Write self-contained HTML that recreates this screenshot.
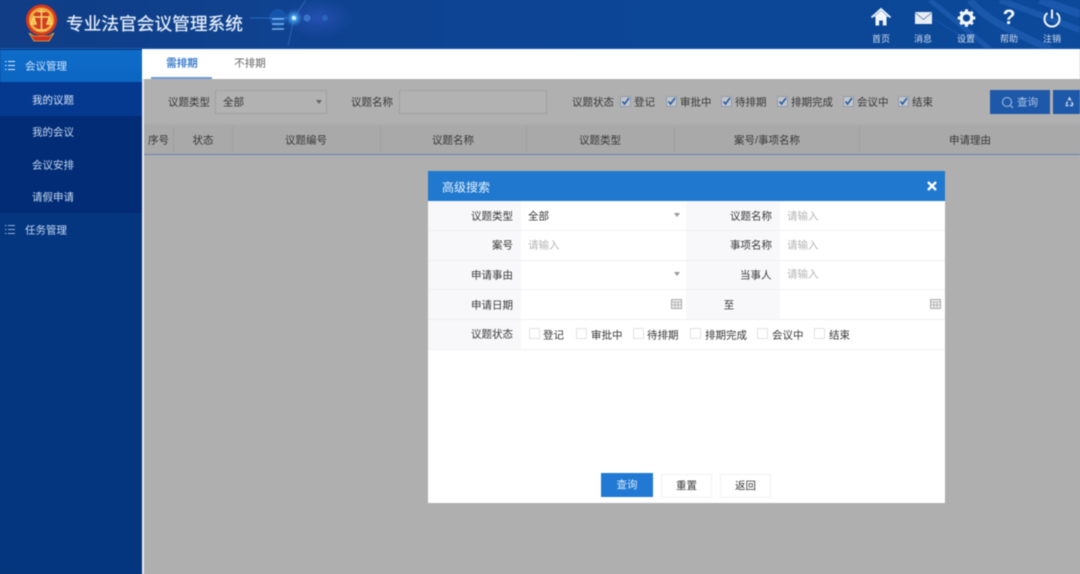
<!DOCTYPE html>
<html lang="zh">
<head>
<meta charset="utf-8">
<title>专业法官会议管理系统</title>
<style>
*{box-sizing:border-box}
html,body{margin:0;padding:0}
html{background:linear-gradient(#0d4693 49px,transparent 49px),linear-gradient(90deg,#04367f 142px,#afafb0 142px)}
body{width:1080px;height:574px;overflow:hidden;position:relative;background:#afafb0;font-family:"Liberation Sans","Noto Sans CJK SC",sans-serif;font-size:10.500px;color:#383838;filter:blur(.4px)}
.a{position:absolute;white-space:nowrap}
#hd{left:0;top:0;width:1080px;height:49px;background:linear-gradient(90deg,#103d85 0,#0f4290 25%,#0c4696 60%,#0c4898 85%,#0d4a9c 100%);overflow:hidden}
#side{left:0;top:49px;width:142px;height:525px;background:#04367f}
.nav{position:absolute;left:0;width:142px;color:#c4d8f2;font-size:10.500px}
.nav span{position:absolute;left:32px;top:50%;transform:translateY(-50%)}
.t{position:absolute;transform:translate(-50%,-50%);white-space:nowrap}
.r{position:absolute;transform:translateY(-50%);text-align:right;white-space:nowrap}
.l{position:absolute;transform:translateY(-50%);white-space:nowrap}
.cb{position:absolute;width:11px;height:11px;border:1px solid #8e9aab;background:#c3c5cb}
.cb svg{position:absolute;left:0;top:0}
.ck{position:absolute;width:11px;height:11px;border:1px solid #e2e2e2;background:#fff}
.ph{color:#b5b5b5;font-size:10.500px}
.sep{position:absolute;top:126px;width:1px;height:27px;background:#a0a0a1}
.tic{position:absolute;top:7px;width:32px;height:36px;color:#fff}
.tic b{position:absolute;left:-4px;width:40px;top:25px;font-weight:normal;font-size:9px;text-align:center;color:#cfdcef}
</style>
</head>
<body>
<div class="a" id="hd">
<svg width="1080" height="49" style="position:absolute;left:0;top:0">
<defs>
<radialGradient id="g1"><stop offset="0" stop-color="#e8fbff"/><stop offset=".22" stop-color="#4fb4f8" stop-opacity=".95"/><stop offset="1" stop-color="#2a73d0" stop-opacity="0"/></radialGradient>
<radialGradient id="g2"><stop offset="0" stop-color="#2d55c0" stop-opacity=".75"/><stop offset="1" stop-color="#2a4fb0" stop-opacity="0"/></radialGradient>
</defs>
<ellipse cx="318" cy="18" rx="36" ry="20" fill="url(#g2)"/>
<circle cx="278" cy="18" r="9" fill="#1a66c4" opacity=".5"/>
<circle cx="294" cy="18" r="9" fill="url(#g1)"/>
<circle cx="307" cy="18" r="3.500" fill="#4f91e0" opacity=".6"/>
<circle cx="294" cy="18" r="2" fill="#eafcff"/>
<circle cx="325" cy="18" r="3" fill="#2f6fc8" opacity=".7"/>
<path d="M250 18H288" stroke="#3f86da" stroke-width="1" opacity=".6"/>
<path d="M306 0L294 18L288 46" stroke="#4f96e6" stroke-width="1" opacity=".4" fill="none"/>
<g fill="none" stroke="#2d6fc6" opacity=".4">
<path d="M930 0L990 49" stroke-width="5"/><path d="M970 0C985 20 1020 35 1050 49" stroke-width="7"/><path d="M1000 0L1080 30" stroke-width="6"/><path d="M1040 0L1080 14" stroke-width="8"/><path d="M925 14L965 38" stroke-width="1"/>
</g>
<g stroke="#7fb2ea" stroke-width="1.600"><path d="M272 19H284M272 24H284M272 29H284"/></g>
<!-- emblem -->
<path d="M29 33L34 41H49L54 33L49 36H34Z" fill="#d2301c" stroke="#e6a83e" stroke-width=".8"/>
<circle cx="41.500" cy="20" r="15.500" fill="#d7381e"/>
<circle cx="41.500" cy="20" r="12.500" fill="#eca93c"/>
<circle cx="41.500" cy="20" r="9.500" fill="#d13c20"/>
<path d="M41.500 9V29M37.500 11.500H45.500M33.500 17H49.500M33.500 17L31 24H36ZM49.500 17L47 24H52ZM36 30H47" stroke="#f9d468" stroke-width="1.600" fill="#f0b23e"/>
</svg>
<div class="a" style="left:66px;top:12px;font-size:17.700px;line-height:25px;color:#e8f1fc;text-shadow:0 0 .6px #e8f1fc">专业法官会议管理系统</div>

<div class="tic" style="left:865px"><svg width="32" height="24" viewBox="0 0 32 24"><path d="M16 3.500L9 10H10.500V18.500H14.200V13.500H17.800V18.500H21.500V10H23Z" fill="#f2f6fb"/><path d="M6.500 10.500L16 2L25.500 10.500" fill="none" stroke="#f2f6fb" stroke-width="1.800"/></svg><b>首页</b></div>
<div class="tic" style="left:907px"><svg width="32" height="24" viewBox="0 0 32 24"><rect x="8" y="5" width="17" height="12" fill="#e8edf4"/><path d="M8 5.500L16.500 12.500L25 5.500" fill="none" stroke="#6f8fbc" stroke-width="1"/></svg><b>消息</b></div>
<div class="tic" style="left:950px"><svg width="32" height="24" viewBox="0 0 32 24"><circle cx="16.500" cy="11" r="5.300" fill="none" stroke="#f2f6fb" stroke-width="3.300"/><path d="M16.500 2.200V5M16.500 17V19.800M7.700 11H10.500M22.500 11H25.300M10.300 4.800L12.300 6.800M20.700 15.200L22.700 17.200M22.700 4.800L20.700 6.800M12.300 15.200L10.300 17.200" stroke="#f2f6fb" stroke-width="3"/></svg><b>设置</b></div>
<div class="tic" style="left:993px"><div class="t" style="left:16px;top:11px;font-size:21px;font-weight:bold;color:#f2f6fb;line-height:22px">?</div><b>帮助</b></div>
<div class="tic" style="left:1036px"><svg width="32" height="24" viewBox="0 0 32 24"><path d="M11.500 6A7.500 7.500 0 1 0 20.500 6" fill="none" stroke="#f2f6fb" stroke-width="2"/><path d="M16 2.500V11.500" stroke="#f2f6fb" stroke-width="2"/></svg><b>注销</b></div>
</div>

<div class="a" style="left:0;top:48px;width:1080px;height:1px;background:#1a5cae"></div>
<div class="a" style="left:0;top:49px;width:142px;height:1px;background:#7ea7dc;opacity:.6"></div>

<div class="a" id="side"></div>
<div class="nav" style="top:50px;height:32px;background:linear-gradient(180deg,#0e6cc9,#0c66c2);color:#cfe4fa"><span style="left:25px">会议管理</span>
<svg width="14" height="12" style="position:absolute;left:4px;top:10px"><path d="M4 1.500H11M4 5.500H11M4 9.500H11M1 1.500H2.500M1 5.500H2.500M1 9.500H2.500" stroke="#dcebfb" stroke-width="1.100"/></svg></div>
<div class="nav" style="top:82px;height:34px;background:#05398f;color:#d6e3f6"><span style="margin-top:1px">我的议题</span></div>
<div class="nav" style="top:116px;height:32px;background:#022c75"><span>我的会议</span></div>
<div class="nav" style="top:148px;height:33px;background:#022c75"><span>会议安排</span></div>
<div class="nav" style="top:181px;height:32px;background:#022c75"><span>请假申请</span></div>
<div class="nav" style="top:213px;height:33px;background:#04367f"><span style="left:25px">任务管理</span>
<svg width="14" height="12" style="position:absolute;left:4px;top:11px"><path d="M4 1.500H11M4 5.500H11M4 9.500H11M1 1.500H2.500M1 5.500H2.500M1 9.500H2.500" stroke="#8fb0dc" stroke-width="1.100"/></svg></div>

<div class="a" style="left:142px;top:49px;width:2px;height:525px;background:#e9ecf0"></div>
<div class="a" style="left:142px;top:49px;width:938px;height:30px;background:#fff"></div>
<div class="t" style="left:182px;top:63px;color:#3d7fcc;font-weight:bold">需排期</div>
<div class="t" style="left:250px;top:63px;color:#666">不排期</div>
<div class="a" style="left:151px;top:77px;width:61px;height:2px;background:#6f9bd2"></div>

<div class="a" style="left:144px;top:79px;width:936px;height:45px;background:#b1b0b1"></div>
<div class="a" style="left:144px;top:124px;width:936px;height:30px;background:#a9a9aa"></div>
<div class="a" style="left:144px;top:154px;width:936px;height:1px;background:#6a84b4"></div>
<div class="a" style="left:144px;top:155px;width:936px;height:419px;background:#afafb0"></div>

<div class="l" style="left:168px;top:102px">议题类型</div>
<div class="a" style="left:215px;top:90px;width:112px;height:24px;border:1px solid #a0a0a0;background:#b3b2b3"></div>
<div class="l" style="left:223px;top:102px">全部</div>
<div class="a" style="left:315.500px;top:100px;width:0;height:0;border-left:3.500px solid transparent;border-right:3.500px solid transparent;border-top:4px solid #666"></div>
<div class="l" style="left:351px;top:102px">议题名称</div>
<div class="a" style="left:399px;top:90px;width:148px;height:24px;border:1px solid #a0a0a0;background:#b3b2b3"></div>
<div class="l" style="left:572px;top:102px">议题状态</div>

<div class="cb" style="left:620px;top:96px"><svg width="9" height="9"><path d="M1.500 4.500L3.500 7L8 1" fill="none" stroke="#21599f" stroke-width="1.500"/></svg></div><div class="l" style="left:634px;top:102px">登记</div>
<div class="cb" style="left:666px;top:96px"><svg width="9" height="9"><path d="M1.500 4.500L3.500 7L8 1" fill="none" stroke="#21599f" stroke-width="1.500"/></svg></div><div class="l" style="left:680px;top:102px">审批中</div>
<div class="cb" style="left:721px;top:96px"><svg width="9" height="9"><path d="M1.500 4.500L3.500 7L8 1" fill="none" stroke="#21599f" stroke-width="1.500"/></svg></div><div class="l" style="left:735px;top:102px">待排期</div>
<div class="cb" style="left:777px;top:96px"><svg width="9" height="9"><path d="M1.500 4.500L3.500 7L8 1" fill="none" stroke="#21599f" stroke-width="1.500"/></svg></div><div class="l" style="left:791px;top:102px">排期完成</div>
<div class="cb" style="left:843px;top:96px"><svg width="9" height="9"><path d="M1.500 4.500L3.500 7L8 1" fill="none" stroke="#21599f" stroke-width="1.500"/></svg></div><div class="l" style="left:857px;top:102px">会议中</div>
<div class="cb" style="left:898px;top:96px"><svg width="9" height="9"><path d="M1.500 4.500L3.500 7L8 1" fill="none" stroke="#21599f" stroke-width="1.500"/></svg></div><div class="l" style="left:912px;top:102px">结束</div>

<div class="a" style="left:990px;top:90px;width:60px;height:24px;background:#1e58a8"></div>
<svg class="a" style="left:1001px;top:96px" width="13" height="13"><circle cx="6" cy="6" r="4.500" fill="none" stroke="#a9c4e8" stroke-width="1"/><path d="M9.500 9.500L12 12" stroke="#a9c4e8"/></svg>
<div class="l" style="left:1017px;top:102px;color:#a9c4e8">查询</div>
<div class="a" style="left:1053px;top:90px;width:27px;height:24px;background:#1e58a8"></div>
<svg class="a" style="left:1064px;top:97px" width="11" height="11"><path d="M5.500 1L9.500 8.500H1.500Z" fill="none" stroke="#c5d6ee" stroke-width="1.500" stroke-dasharray="3 1.500"/></svg>

<div class="t" style="left:158.500px;top:140px">序号</div>
<div class="t" style="left:203px;top:140px">状态</div>
<div class="t" style="left:306px;top:140px">议题编号</div>
<div class="t" style="left:453px;top:140px">议题名称</div>
<div class="t" style="left:600px;top:140px">议题类型</div>
<div class="t" style="left:767px;top:140px">案号/事项名称</div>
<div class="t" style="left:970px;top:140px">申请理由</div>
<div class="sep" style="left:173px"></div>
<div class="sep" style="left:232px"></div>
<div class="sep" style="left:380px"></div>
<div class="sep" style="left:526px"></div>
<div class="sep" style="left:674px"></div>
<div class="sep" style="left:859px"></div>

<!-- modal -->
<div class="a" style="left:428px;top:171px;width:517px;height:332px;background:#fff"></div>
<div class="a" style="left:428px;top:171px;width:517px;height:30px;background:#2179cf"></div>
<div class="l" style="left:442px;top:187px;color:#e4f0fb;font-size:12px">高级搜索</div>
<svg class="a" style="left:926px;top:180px" width="12" height="12"><path d="M2 2L10 10M10 2L2 10" stroke="#fff" stroke-width="2.400"/></svg>

<div class="a" style="left:428px;top:201px;width:93px;height:148px;background:#f8f8fa"></div>
<div class="a" style="left:686px;top:201px;width:94px;height:118px;background:#f8f8fa"></div>
<div class="a" style="left:428px;top:230px;width:517px;height:1px;background:#f0f0f0"></div>
<div class="a" style="left:428px;top:260px;width:517px;height:1px;background:#f0f0f0"></div>
<div class="a" style="left:428px;top:289px;width:517px;height:1px;background:#f0f0f0"></div>
<div class="a" style="left:428px;top:319px;width:517px;height:1px;background:#f0f0f0"></div>
<div class="a" style="left:428px;top:349px;width:517px;height:1px;background:#f0f0f0"></div>

<div class="l" style="left:471px;top:216px">议题类型</div>
<div class="l" style="left:492px;top:245px">案号</div>
<div class="l" style="left:471px;top:275px">申请事由</div>
<div class="l" style="left:471px;top:305px">申请日期</div>
<div class="l" style="left:471px;top:334px">议题状态</div>
<div class="l" style="left:730px;top:216px">议题名称</div>
<div class="l" style="left:730px;top:245px">事项名称</div>
<div class="l" style="left:740px;top:275px">当事人</div>
<div class="t" style="left:729px;top:305px">至</div>

<div class="l" style="left:528px;top:216px">全部</div>
<div class="a" style="left:674px;top:213px;width:0;height:0;border-left:3.500px solid transparent;border-right:3.500px solid transparent;border-top:4px solid #999"></div>
<div class="a" style="left:674px;top:272px;width:0;height:0;border-left:3.500px solid transparent;border-right:3.500px solid transparent;border-top:4px solid #999"></div>
<div class="l ph" style="left:528px;top:245px">请输入</div>
<div class="l ph" style="left:787px;top:216px">请输入</div>
<div class="l ph" style="left:787px;top:245px">请输入</div>
<div class="l ph" style="left:787px;top:274px">请输入</div>

<svg class="a" style="left:671px;top:298px" width="11" height="11"><rect x=".5" y="1.500" width="10" height="9" fill="#eee" stroke="#aaa"/><path d="M.5 4H10.500M4 4V10M7 4V10M.5 7H10.500" stroke="#aaa" stroke-width=".7"/></svg>
<svg class="a" style="left:930px;top:298px" width="11" height="11"><rect x=".5" y="1.500" width="10" height="9" fill="#eee" stroke="#aaa"/><path d="M.5 4H10.500M4 4V10M7 4V10M.5 7H10.500" stroke="#aaa" stroke-width=".7"/></svg>

<div class="ck" style="left:529px;top:328px"></div><div class="l" style="left:543px;top:335px">登记</div>
<div class="ck" style="left:576px;top:328px"></div><div class="l" style="left:591px;top:335px">审批中</div>
<div class="ck" style="left:633px;top:328px"></div><div class="l" style="left:647px;top:335px">待排期</div>
<div class="ck" style="left:690px;top:328px"></div><div class="l" style="left:705px;top:335px">排期完成</div>
<div class="ck" style="left:757px;top:328px"></div><div class="l" style="left:772px;top:335px">会议中</div>
<div class="ck" style="left:814px;top:328px"></div><div class="l" style="left:829px;top:335px">结束</div>

<div class="a" style="left:601px;top:473px;width:52px;height:24px;background:#2179d4;color:#d8e9fa;text-align:center;line-height:24px">查询</div>
<div class="a" style="left:661px;top:474px;width:51px;height:24px;background:#fff;border:1px solid #f1f1f1;text-align:center;line-height:22px">重置</div>
<div class="a" style="left:720px;top:474px;width:51px;height:24px;background:#fff;border:1px solid #f1f1f1;text-align:center;line-height:22px">返回</div>
</body>
</html>
